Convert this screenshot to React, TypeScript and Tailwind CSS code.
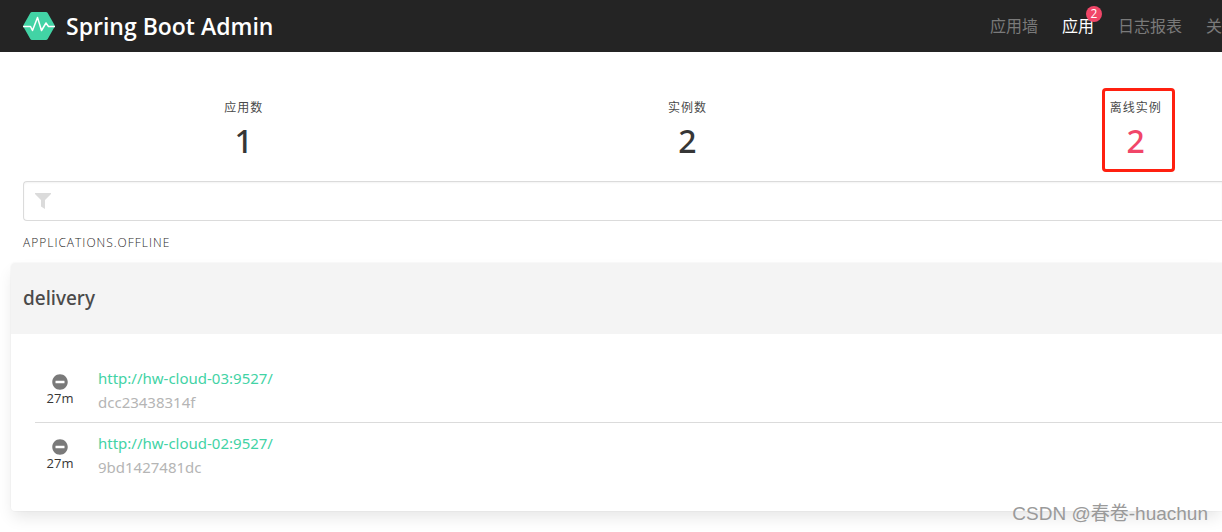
import { FaMinusCircle } from "react-icons/fa";

interface InstanceProps {
  url: string;
  id: string;
  time: string;
}

const navItems = [
  { label: "应用墙", active: false, badge: 0 },
  { label: "应用", active: true, badge: 2 },
  { label: "日志报表", active: false, badge: 0 },
  { label: "关", active: false, badge: 0 },
];

const stats = [
  { label: "应用数", value: 1, offline: false },
  { label: "实例数", value: 2, offline: false },
  { label: "离线实例", value: 2, offline: true },
];

const instances: InstanceProps[] = [
  { url: "http://hw-cloud-03:9527/", id: "dcc23438314f", time: "27m" },
  { url: "http://hw-cloud-02:9527/", id: "9bd1427481dc", time: "27m" },
];

const Logo = () => (
  <svg viewBox="0 0 32 30" className="w-8 h-[30px]">
    <path
      d="M9 1h14a2 2 0 0 1 1.7 1l6.5 11.5a3 3 0 0 1 0 3L24.7 28a2 2 0 0 1-1.7 1H9a2 2 0 0 1-1.7-1L.8 16.5a3 3 0 0 1 0-3L7.3 2A2 2 0 0 1 9 1z"
      fill="#42d3a5"
    />
    <path
      d="M0 15.5h7.500l2 4L14.500 6.500l4 13 4.500-7.500 2.500 3.500H32"
      fill="none"
      stroke="#fff"
      strokeWidth="1.5"
      strokeLinejoin="round"
    />
  </svg>
);

const FilterIcon = () => (
  <svg viewBox="0 0 16 16" className="w-4 h-4" fill="#dbdbdb">
    <path d="M0 0h16v1l-6 6v9l-4-2.500V7L0 1z" />
  </svg>
);

const Header = () => (
  <header className="flex items-center h-[52px] bg-[#242424] whitespace-nowrap overflow-hidden">
    <a href="#" className="flex items-center gap-[11px] pl-[23px] text-white">
      <Logo />
      <span className="text-[23px] font-semibold">Spring Boot Admin</span>
    </a>
    <nav className="flex ml-auto gap-6">
      {navItems.map((item) => (
        <a
          key={item.label}
          href="#"
          className={`relative text-base ${
            item.active ? "text-white" : "text-[#7a7a7a]"
          }`}
        >
          {item.label}
          {item.badge > 0 && (
            <span className="absolute -top-2 -right-2 w-4 h-4 rounded-full bg-[#f14668] text-xs leading-4 text-center text-white">
              {item.badge}
            </span>
          )}
        </a>
      ))}
    </nav>
  </header>
);

const Instance = ({ url, id, time }: InstanceProps) => (
  <li className="flex items-center gap-[13px] py-2 border-b border-[#dbdbdb] last:border-b-0">
    <div className="flex flex-col items-center w-[50px] text-[13px] leading-4 text-[#363636]">
      <FaMinusCircle className="w-4 h-4 text-[#7a7a7a]" />
      <span>{time}</span>
    </div>
    <div className="flex flex-col items-start text-[15px] leading-6 font-['Noto_Sans',sans-serif]">
      <a href="#" className="text-[#42d3a5]">
        {url}
      </a>
      <span className="text-[#b5b5b5]">{id}</span>
    </div>
  </li>
);

const App = () => {
  return (
    <div className="relative min-h-screen overflow-hidden bg-white text-[#4a4a4a] font-['Open_Sans','Noto_Sans_CJK_SC',sans-serif]">
      <Header />
      <main className="pl-[23px] pt-9 pb-5">
        {/* Stats */}
        <div className="grid grid-cols-[442fr_447fr_456fr] w-[112%] justify-items-center">
          {stats.map((stat) => (
            <div
              key={stat.label}
              className={`flex flex-col items-center border-3 rounded py-2 ${
                stat.offline ? "border-[#ff2010] pl-[5px] pr-[10px]" : "border-transparent"
              }`}
            >
              <p className="text-xs leading-[18px] tracking-[1px]">{stat.label}</p>
              <p
                className={`mt-1 text-[32px] leading-10 font-medium font-['Noto_Sans',sans-serif] ${
                  stat.offline ? "text-[#f14668]" : "text-[#363636]"
                }`}
              >
                {stat.value}
              </p>
            </div>
          ))}
        </div>

        {/* Filter */}
        <div className="relative mt-[9px]">
          <input
            type="text"
            aria-label="Filter"
            className="block w-full h-10 pl-10 pr-3 border border-r-0 border-[#dbdbdb] rounded-l shadow-[inset_0_1px_2px_rgba(10,10,10,0.05)] outline-0"
          />
          <div className="absolute left-3 top-3 pointer-events-none">
            <FilterIcon />
          </div>
        </div>

        <h2 className="mt-[13px] text-xs leading-[18px] tracking-[1px] uppercase font-light text-[#1f1f1f]">
          applications.offline
        </h2>

        {/* Application card */}
        <section className="-ml-3 mt-[11px] rounded-l shadow-[0_8px_16px_-2px_rgba(10,10,10,0.1),0_0_0_1px_rgba(10,10,10,0.02)]">
          <div className="flex items-center h-[71px] px-3 bg-[#f4f4f4] rounded-tl">
            <h3 className="text-[19px] font-medium font-['Noto_Sans',sans-serif]">delivery</h3>
          </div>
          <ul className="py-6 pl-6">
            {instances.map((instance) => (
              <Instance key={instance.id} {...instance} />
            ))}
          </ul>
        </section>
      </main>
      <div className="absolute right-3.5 bottom-1 text-[19px] leading-7 text-[#9a9a9a] font-['Liberation_Sans','Noto_Sans_CJK_SC',sans-serif]">
        CSDN @春卷-huachun
      </div>
    </div>
  );
};

export default App;
